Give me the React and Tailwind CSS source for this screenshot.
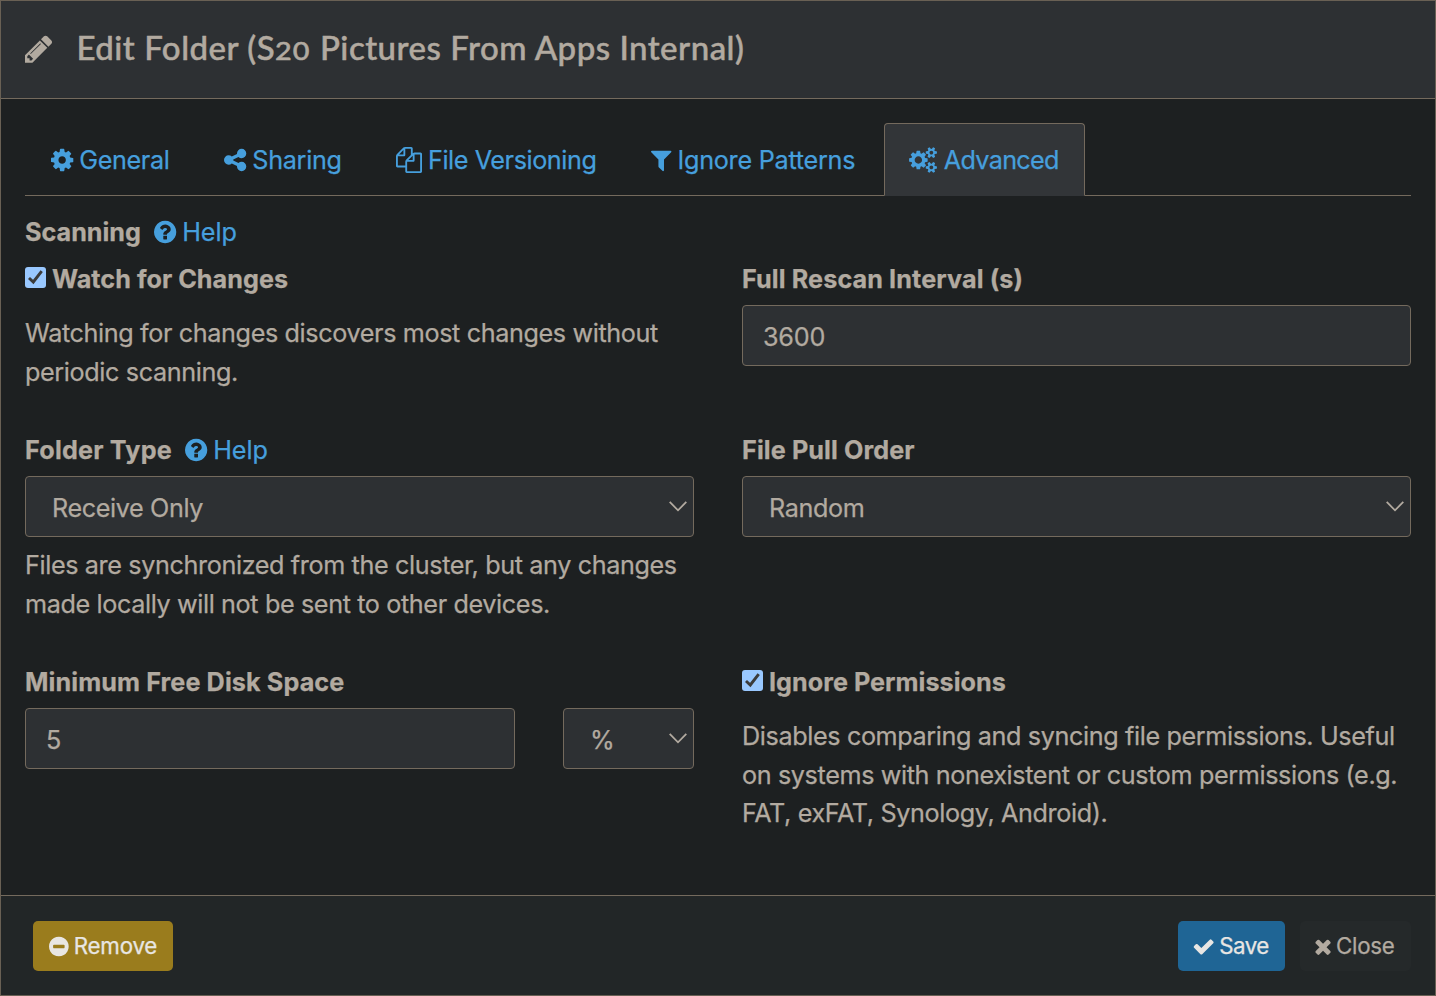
const CIRCLE = 'm384 192q0 209-103 385.5t-279.5 279.5-385.5 103-385.5-103-279.5-279.5-103-385.5 103-385.5 279.5-279.5 385.5-103 385.5 103 279.5 279.5 103 385.5z';

const SMALL_GEAR = 'v140q0 16-149 31-12 27-30 52 51 113 51 138 0 4-4 7-122 71-124 71-8 0-46-47t-52-68q-20 2-30 2t-30-2q-14 21-52 68t-46 47q-2 0-124-71-4-3-4-7 0-25 51-138-18-25-30-52-149-15-149-31v-140q0-16 149-31 13-29 30-52-51-113-51-138 0-4 4-7 4-2 35-20t59-34 30-16q8 0 46 46.5t52 67.5q20-2 30-2t30 2q51-71 92-112l6-2q4 0 124 70 4 3 4 7 0 25-51 138 17 23 30 52 149 15 149 31z';

const PATHS = {
  cog: 'M1152 896q0-106-75-181t-181-75-181 75-75 181 75 181 181 75 181-75 75-181zm512-109v222q0 12-8 23t-20 13l-185 28q-19 54-39 91 35 50 107 138 10 12 10 25t-9 23q-27 37-99 108t-94 71q-12 0-26-9l-138-108q-44 23-91 38-16 136-29 186-7 28-36 28h-222q-14 0-24.5-8.5t-11.5-21.5l-28-184q-49-16-90-37l-141 107q-10 9-25 9-14 0-25-11-126-114-165-168-7-10-7-23 0-12 8-23 15-21 51-66.5t54-70.5q-27-50-41-99l-183-27q-13-2-21-12.5t-8-23.5v-222q0-12 8-23t19-13l186-28q14-46 39-92-40-57-107-138-10-12-10-24 0-10 9-23 26-36 98.5-107.5t94.5-71.5q13 0 26 10l138 107q44-23 91-38 16-136 29-186 7-28 36-28h222q14 0 24.5 8.5t11.5 21.5l28 184q49 16 90 37l142-107q9-9 24-9 13 0 25 10 129 119 165 170 7 8 7 22 0 12-8 23-15 21-51 66.5t-54 70.5q26 50 41 98l183 28q13 2 21 12.5t8 23.5z',
  cogs: 'M832 896q0-106-75-181t-181-75-181 75-75 181 75 181 181 75 181-75 75-181zm768 512q0-52-38-90t-90-38-90 38-38 90q0 53 37.5 90.5t90.5 37.5 90.5-37.5 37.5-90.5zm0-1024q0-52-38-90t-90-38-90 38-38 90q0 53 37.5 90.5t90.5 37.5 90.5-37.5 37.5-90.5zm-384 421v185q0 10-7 19.5t-16 10.5l-155 24q-11 35-32 76 34 48 90 115 7 11 7 20 0 12-7 19-23 30-82.5 89.5t-78.5 59.5q-11 0-21-7l-115-90q-37 19-77 31-11 108-23 155-7 24-30 24h-186q-11 0-20-7.5t-10-17.5l-23-153q-34-10-75-31l-118 89q-7 7-20 7-11 0-21-8-144-133-144-160 0-9 7-19 10-14 41-53t47-61q-23-44-35-82l-152-24q-10-1-17-9.5t-7-19.5v-185q0-10 7-19.5t16-10.5l155-24q11-35 32-76-34-48-90-115-7-11-7-20 0-12 7-20 22-30 82-89t79-59q11 0 21 7l115 90q34-18 77-32 11-108 23-154 7-24 30-24h186q11 0 20 7.5t10 17.5l23 153q34 10 75 31l118-89q8-7 20-7 11 0 21 8 144 133 144 160 0 8-7 19-12 16-42 54t-45 60q23 48 34 82l152 23q10 2 17 10.5t7 19.5zM1856 1338' + SMALL_GEAR + 'M1856 314' + SMALL_GEAR,
  files: 'M1696 384q40 0 68 28t28 68v1216q0 40-28 68t-68 28h-960q-40 0-68-28t-28-68v-288h-544q-40 0-68-28t-28-68v-672q0-40 20-88t48-76l408-408q28-28 76-48t88-20h416q40 0 68 28t28 68v328q68-40 128-40h416zm-544 213l-299 299h299v-299zm-640-384l-299 299h299v-299zm196 647l316-316v-416h-384v416q0 40-28 68t-68 28h-416v640h512v-256q0-40 20-88t48-76zm956 804v-1152h-384v416q0 40-28 68t-68 28h-416v640h896z',
  pencil: 'M491 1536l91-91-235-235-91 91v107h128v128h107zm523-928q0-22-22-22-10 0-17 7l-542 542q-7 7-7 17 0 22 22 22 10 0 17-7l542-542q7-7 7-17zm-54-192l416 416-832 832h-416v-416zm683 96q0 53-37 90l-166 166-416-416 166-165q36-38 90-38 53 0 91 38l235 234q37 39 37 91z',
  question: 'M1024 1376v-192q0-14-9-23t-23-9h-192q-14 0-23 9t-9 23v192q0 14 9 23t23 9h192q14 0 23-9t9-23zm256-672q0-88-55.5-163t-138.5-116-170-41q-243 0-371 213-15 24 8 42l132 100q7 6 19 6 16 0 25-12 53-68 86-92 34-24 86-24 48 0 85.5 26t37.5 59q0 38-20 61t-68 45q-63 28-115.5 86.5t-52.5 125.5v36q0 14 9 23t23 9h192q14 0 23-9t9-23q0-19 21.5-49.5t54.5-49.5q32-18 49-28.5t46-35 44.5-48 28-60.5 12.5-81z' + CIRCLE,
  share: 'M1344 1024q133 0 226.5 93.5t93.5 226.5-93.5 226.5-226.5 93.5-226.5-93.5-93.5-226.5q0-12 2-34l-360-180q-92 86-218 86-133 0-226.5-93.5t-93.5-226.5 93.5-226.5 226.5-93.5q126 0 218 86l360-180q-2-22-2-34 0-133 93.5-226.5t226.5-93.5 226.5 93.5 93.5 226.5-93.5 226.5-226.5 93.5q-126 0-218-86l-360 180q2 22 2 34t-2 34l360 180q92-86 218-86z',
  filter: 'M1595 295q17 41-14 70l-493 493v742q0 42-39 59-13 5-25 5-27 0-45-19l-256-256q-19-19-19-45v-486l-493-493q-31-29-14-70 17-39 59-39h1280q42 0 59 39z',
  minus: 'M1344 960v-128q0-26-19-45t-45-19h-768q-26 0-45 19t-19 45v128q0 26 19 45t45 19h768q26 0 45-19t19-45zm-64-256' + CIRCLE,
  check: 'M1671 566q0 40-28 68l-724 724-136 136q-28 28-68 28t-68-28l-136-136-362-362q-28-28-28-68t28-68l136-136q28-28 68-28t68 28l294 295 656-657q28-28 68-28t68 28l136 136q28 28 28 68z',
  times: 'M1490 1322q0 40-28 68l-136 136q-28 28-68 28t-68-28l-294-294-294 294q-28 28-68 28t-68-28l-136-136q-28-28-28-68t28-68l294-294-294-294q-28-28-28-68t28-68l136-136q28-28 68-28t68 28l294 294 294-294q28-28 68-28t68 28l136 136q28 28 28 68t-28 68l-294 294 294 294q28 28 28 68z',
};

// left edge and advance width of each glyph, in 1792-per-em units
const BOX = {
  cog: [128, 1536], cogs: [0, 1920], files: [0, 1792], pencil: [128, 1536], question: [128, 1536],
  share: [128, 1536], filter: [192, 1408], minus: [128, 1536], check: [64, 1664], times: [192, 1408],
};

function Icon({ name, size = 26, className = '' }) {
  const [x, w] = BOX[name];
  return (
    <svg className={`shrink-0 overflow-visible ${className}`} width={(w * size) / 1792} height={size} viewBox={`${x} 0 ${w} 1792`} fill="currentColor" aria-hidden="true">
      <path d={PATHS[name]} />
    </svg>
  );
}

const FIELD = 'flex h-[61px] items-center rounded-[4px] border border-[#746a5d] bg-[#2d3033] pt-0.5';
const BOLD = 'font-bold tracking-[0.1px]';

function Tab({ icon, label, className }) {
  return (
    <li className={`flex h-[73px] items-center gap-[6px] rounded-t-[4px] border pl-[25px] whitespace-nowrap text-[#469fdd] ${className}`}>
      <Icon name={icon} />
      <span className="pt-0.5">{label}</span>
    </li>
  );
}

function Help() {
  return (
    <a className="flex h-[39px] items-center gap-[6px] text-[#469fdd]">
      <Icon name="question" />
      <span className="pt-0.5 tracking-[-0.1px]">Help</span>
    </a>
  );
}

function Select({ value, className = '' }) {
  return (
    <div className={`${FIELD} justify-between pr-[6px] pl-[26px] ${className}`}>
      <span className="pt-0.5">{value}</span>
      <svg className="mb-0.5" width="18" height="11" viewBox="0 0 18 11" fill="none" stroke="currentColor" strokeWidth="1.8">
        <path d="M.7 .8 9 9.3 17.3 .8" />
      </svg>
    </div>
  );
}

function Check({ label }) {
  return (
    <label className={`flex h-[39px] items-center gap-[6px] ${BOLD}`}>
      <span className="mb-0.5 flex size-[21px] items-center justify-center rounded-[3px] bg-[#99c8ff]">
        <svg width="21" height="21" viewBox="0 0 21 21" fill="none" stroke="#3b3b3b" strokeWidth="2.9">
          <path d="M4 11 8.3 15 16.7 4.2" />
        </svg>
      </span>
      <span className="pt-0.5 tracking-[0.03px]">{label}</span>
    </label>
  );
}

export default function App() {
  return (
    <div className="flex h-[996px] w-[1436px] flex-col border border-[#696054] bg-[#1d2021] font-['Inter',sans-serif] text-[25.2px] leading-[39px] tracking-[-0.38px] text-[#b2aaa0] [-webkit-text-stroke:0.25px]">
      <header className="flex h-[98px] items-center gap-6 border-b border-[#746a5d] bg-[#2d3033] pl-6">
        <Icon name="pencil" size={32} className="mb-0.5" />
        <h4 className="pb-0.5 font-['Lato',sans-serif] text-[33px] leading-[36px] font-medium tracking-[0.5px] whitespace-nowrap [-webkit-text-stroke:0.5px]">
          Edit Folder (S<span className="mr-[5px] inline-block origin-left scale-x-115 text-[25px] tracking-[1px]">20</span> Pictures From Apps Internal)
        </h4>
      </header>

      <main className="h-[796px] px-6 pt-6">
        <ul className="flex h-[73px] gap-[2px] border-b border-[#746a5d]">
          <Tab icon="cog" label="General" className="w-[171px] border-transparent" />
          <Tab icon="share" label="Sharing" className="w-[170px] border-transparent tracking-[-0.3px]" />
          <Tab icon="files" label="File Versioning" className="w-[253px] border-transparent tracking-[-0.43px]" />
          <Tab icon="filter" label="Ignore Patterns" className="w-[257px] border-transparent tracking-[-0.25px]" />
          <Tab icon="cogs" label="Advanced" className="w-[201px] border-[#746a5d] border-b-[#323538] bg-[#323538] tracking-[-0.7px]" />
        </ul>

        <div className="mt-[16px] flex h-[39px] items-center gap-[13px]">
          <b className="pt-0.5 font-bold tracking-normal">Scanning</b>
          <Help />
        </div>

        <div className="mt-2 grid grid-cols-[669px_669px] gap-x-12 whitespace-nowrap">
          <section className="h-[171px]">
            <Check label="Watch for Changes" />
            <p className="mt-4">Watching for changes discovers most changes without<br />periodic scanning.</p>
          </section>
          <section>
            <div className={`h-[46px] pt-px ${BOLD}`}>Full Rescan Interval (s)</div>
            <div className={`${FIELD} pl-5`}><span className="pt-0.5 tracking-[-0.2px]">3600</span></div>
          </section>

          <section className="h-[232px]">
            <div className="flex h-[46px] items-start gap-[13px]">
              <b className="pt-px font-bold tracking-[0.2px]">Folder Type</b>
              <Help />
            </div>
            <Select value="Receive Only" />
            <p className="mt-[9px]">Files are synchronized from the cluster, but any changes<br />made locally will not be sent to other devices.</p>
          </section>
          <section>
            <div className={`h-[46px] pt-px ${BOLD}`}>File Pull Order</div>
            <Select value="Random" />
          </section>

          <section>
            <div className={`h-[46px] pt-px ${BOLD}`}>Minimum Free Disk Space</div>
            <div className="flex gap-12">
              <div className={`${FIELD} w-[490px] pl-5`}><span className="pt-0.5">5</span></div>
              <Select value="%" className="w-[131px]" />
            </div>
          </section>
          <section>
            <Check label="Ignore Permissions" />
            <p className="mt-4 leading-[38.6px]">Disables comparing and syncing file permissions. Useful<br />on systems with nonexistent or custom permissions (e.g.<br />FAT, exFAT, Synology, Android).</p>
          </section>
        </div>
      </main>

      <footer className="flex flex-1 items-start border-t border-[#746a5d] bg-[#222627] pt-[25px] pr-6 pl-8 text-[22.3px]">
        <button className="flex h-[50px] w-[140px] items-center gap-[5px] rounded-[5px] bg-[#9a7c1d] pl-4 tracking-[-0.2px] text-[#e8e6e3]">
          <Icon name="minus" size={23} />
          <span className="pb-0.5">Remove</span>
        </button>
        <button className="ml-auto flex h-[50px] w-[107px] items-center gap-[5px] rounded-[5px] bg-[#1f6595] pl-[15px] tracking-[-0.6px] text-[#e8e6e3]">
          <Icon name="check" size={23} />
          <span className="pb-0.5">Save</span>
        </button>
        <button className="ml-[15px] flex h-[50px] w-[111px] items-center gap-[4px] rounded-[5px] bg-[#25292a] pl-[14px] tracking-[-0.3px]">
          <Icon name="times" size={23} />
          <span className="pb-0.5">Close</span>
        </button>
      </footer>
    </div>
  );
}
